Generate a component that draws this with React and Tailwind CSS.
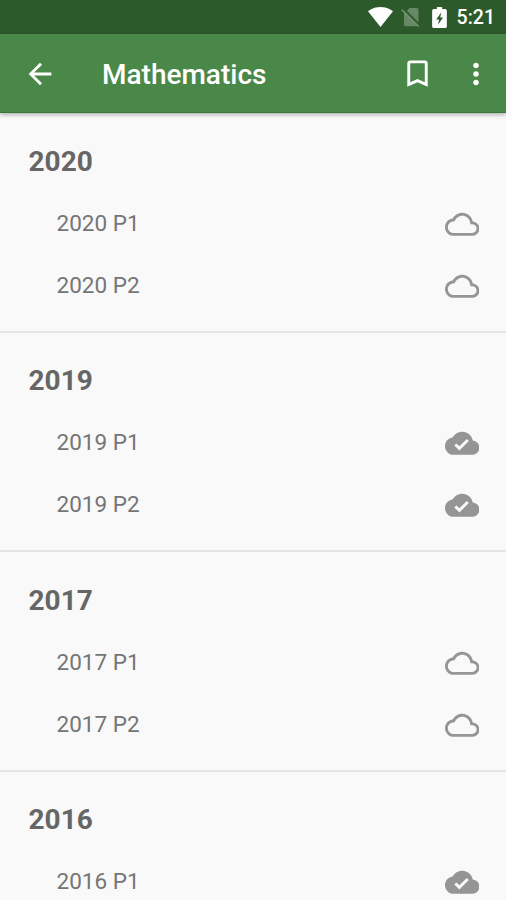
const sections = [
  { year: '2020', papers: ['P1', 'P2'], downloaded: false },
  { year: '2019', papers: ['P1', 'P2'], downloaded: true },
  { year: '2017', papers: ['P1', 'P2'], downloaded: false },
  { year: '2016', papers: ['P1'], downloaded: true },
];

function Icon({ path, className }) {
  return (
    <svg viewBox="0 0 24 24" fill="currentColor" className={className}>
      <path d={path} />
    </svg>
  );
}

const BACK = 'M20 11H7.83l5.59-5.59L12 4l-8 8 8 8 1.41-1.41L7.83 13H20v-2z';
const BOOKMARK = 'M17 3H7c-1.1 0-1.99.9-1.99 2L5 21l7-3 7 3V5c0-1.1-.9-2-2-2zm0 15l-5-2.18L7 18V5h10v13z';
const MORE = 'M12 8c1.1 0 2-.9 2-2s-.9-2-2-2-2 .9-2 2 .9 2 2 2zm0 2c-1.1 0-2 .9-2 2s.9 2 2 2 2-.9 2-2-.9-2-2-2zm0 6c-1.1 0-2 .9-2 2s.9 2 2 2 2-.9 2-2-.9-2-2-2z';
const CLOUD = 'M19.35 10.04C18.67 6.59 15.64 4 12 4 9.11 4 6.6 5.64 5.35 8.04 2.34 8.36 0 10.91 0 14c0 3.31 2.69 6 6 6h13c2.76 0 5-2.24 5-5 0-2.64-2.05-4.78-4.65-4.96zM19 18H6c-2.21 0-4-1.79-4-4 0-2.05 1.53-3.76 3.56-3.97l1.07-.11.5-.95C8.08 7.14 9.94 6 12 6c2.62 0 4.88 1.86 5.39 4.43l.3 1.5 1.53.11c1.56.1 2.78 1.41 2.78 2.96 0 1.65-1.35 3-3 3z';
const CLOUD_DONE = 'M19.35 10.04C18.67 6.59 15.64 4 12 4 9.11 4 6.6 5.64 5.35 8.04 2.34 8.36 0 10.91 0 14c0 3.31 2.69 6 6 6h13c2.76 0 5-2.24 5-5 0-2.64-2.05-4.78-4.65-4.96zM10 17l-3.5-3.5 1.41-1.41L10 14.17 15.18 9l1.41 1.41L10 17z';

function StatusBar() {
  return (
    <div className="flex h-[34px] items-center bg-[#2d5a2a] pr-[11px] text-white">
      <svg viewBox="0 0 25 20" fill="currentColor" className="ml-auto h-5 w-[25px]">
        <path d="M12.5 20 25 4.3C24.5 3.9 19.7 0 12.5 0S.5 3.9 0 4.3z" />
      </svg>
      {/* no sim card */}
      <svg viewBox="0 0 20 20" className="ml-2 h-5 w-5">
        <path d="M8.5 1H16a1.500 1.500 0 0 1 1.500 1.500V15.500L5.800 3.700zM3 5.500 16.500 19.300H4.500A1.500 1.500 0 0 1 3 17.800z" fill="#fff" fillOpacity="0.28" />
        <path d="M.8 2.600 17.800 19.600" stroke="#fff" strokeOpacity="0.32" strokeWidth="1.500" />
      </svg>
      <svg viewBox="0 0 14 20" className="ml-[11px] h-[21px] w-[15px]">
        <path d="M4.500 0h5v2h3A1.500 1.500 0 0 1 14 3.500v15a1.500 1.500 0 0 1-1.500 1.500h-11A1.500 1.500 0 0 1 0 18.500v-15A1.500 1.500 0 0 1 1.500 2h3z" fill="#fff" />
        <path d="M8.800 5 3.800 12h2.800l-1 5L10.400 10H7.600z" fill="#2d5a2a" />
      </svg>
      <span className="ml-[10px] pt-[2px] text-[19.500px] leading-none font-medium">5:21</span>
    </div>
  );
}

function AppBar() {
  return (
    <header className="relative flex h-[79px] items-center border-b border-[#3b7539] bg-[#4a8849] pt-px pr-[13px] pl-[23px] text-white shadow-[0_2px_4px_rgba(0,0,0,0.28)]">
      <Icon path={BACK} className="size-[34px]" />
      <h1 className="ml-[45px] pt-[3px] text-[28px] leading-none font-medium">Mathematics</h1>
      <Icon path={BOOKMARK} className="ml-auto size-[35px]" />
      <Icon path={MORE} className="ml-[24.500px] size-[34px]" />
    </header>
  );
}

function Section({ year, papers, downloaded }) {
  return (
    <section className="h-[219.500px] border-b-2 border-[#e5e5e5] pt-[31.500px]">
      <h2 className="h-[47.500px] pl-[28.500px] text-[28px] leading-[34px] font-bold text-[#666]">{year}</h2>
      {papers.map((paper) => (
        <div key={paper} className="flex h-[62px] items-center justify-between pr-[27px] pl-[56.500px]">
          <span className="text-[22.500px] leading-none text-[#757575]">
            {year} {paper}
          </span>
          <Icon path={downloaded ? CLOUD_DONE : CLOUD} className="mt-[2px] size-[34.500px] text-[#959595]" />
        </div>
      ))}
    </section>
  );
}

export default function App() {
  return (
    <div className="h-[900px] w-[506px] overflow-hidden bg-[#f9f9f9] font-['Roboto',sans-serif]">
      <StatusBar />
      <AppBar />
      {sections.map((section) => (
        <Section key={section.year} {...section} />
      ))}
    </div>
  );
}
